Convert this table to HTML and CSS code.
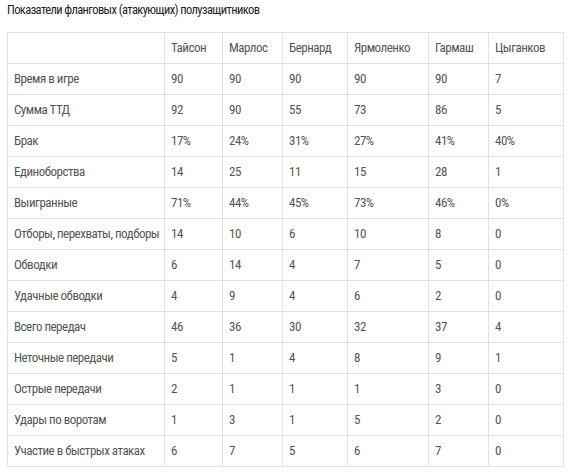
FILE: index.html
```html
<!DOCTYPE html>
<html lang="ru">
<head>
<meta charset="utf-8">
<link rel="stylesheet" href="styles.css">
</head>
<body>
<h3 class="title">Показатели фланговых (атакующих) полузащитников</h3>
<table class="stats">
<colgroup>
<col class="c0"><col class="c1"><col class="c2"><col class="c3"><col class="c4"><col class="c5"><col class="c6">
</colgroup>
<tr><td></td><td>Тайсон</td><td>Марлос</td><td>Бернард</td><td>Ярмоленко</td><td>Гармаш</td><td>Цыганков</td></tr>
<tr><td>Время в игре</td><td>90</td><td>90</td><td>90</td><td>90</td><td>90</td><td>7</td></tr>
<tr><td>Сумма ТТД</td><td>92</td><td>90</td><td>55</td><td>73</td><td>86</td><td>5</td></tr>
<tr><td>Брак</td><td>17%</td><td>24%</td><td>31%</td><td>27%</td><td>41%</td><td>40%</td></tr>
<tr><td>Единоборства</td><td>14</td><td>25</td><td>11</td><td>15</td><td>28</td><td>1</td></tr>
<tr><td>Выигранные</td><td>71%</td><td>44%</td><td>45%</td><td>73%</td><td>46%</td><td>0%</td></tr>
<tr><td>Отборы, перехваты, подборы</td><td>14</td><td>10</td><td>6</td><td>10</td><td>8</td><td>0</td></tr>
<tr><td>Обводки</td><td>6</td><td>14</td><td>4</td><td>7</td><td>5</td><td>0</td></tr>
<tr><td>Удачные обводки</td><td>4</td><td>9</td><td>4</td><td>6</td><td>2</td><td>0</td></tr>
<tr><td>Всего передач</td><td>46</td><td>36</td><td>30</td><td>32</td><td>37</td><td>4</td></tr>
<tr><td>Неточные передачи</td><td>5</td><td>1</td><td>4</td><td>8</td><td>9</td><td>1</td></tr>
<tr><td>Острые передачи</td><td>2</td><td>1</td><td>1</td><td>1</td><td>3</td><td>0</td></tr>
<tr><td>Удары по воротам</td><td>1</td><td>3</td><td>1</td><td>5</td><td>2</td><td>0</td></tr>
<tr><td>Участие в быстрых атаках</td><td>6</td><td>7</td><td>5</td><td>6</td><td>7</td><td>0</td></tr>
</table>
</body>
</html>
```

FILE: styles.css
```css
html, body {
  margin: 0;
  padding: 0;
  background: #fff;
}
body {
  padding: 0 7px;
  font-family: "Roboto Condensed", Roboto, "Liberation Sans", sans-serif;
  color: #555;
}
.title {
  margin: 0;
  padding-top: 1px;
  height: 31px;
  font-size: 12.5px;
  line-height: 17px;
  letter-spacing: -0.6px;
  font-weight: 400;
  color: #222;
}
.stats {
  border-collapse: collapse;
  table-layout: fixed;
  width: 557px;
  font-size: 13px;
  letter-spacing: -0.5px;
}
.stats td {
  border: 1px solid #e2e2e2;
  padding: 8px 6px;
  line-height: 14px;
  white-space: nowrap;
}
.c0 { width: 157px; }
.c1 { width: 58px; }
.c2 { width: 60px; }
.c3 { width: 65px; }
.c4 { width: 81px; }
.c5 { width: 60px; }
.c6 { width: 75px; }
```
